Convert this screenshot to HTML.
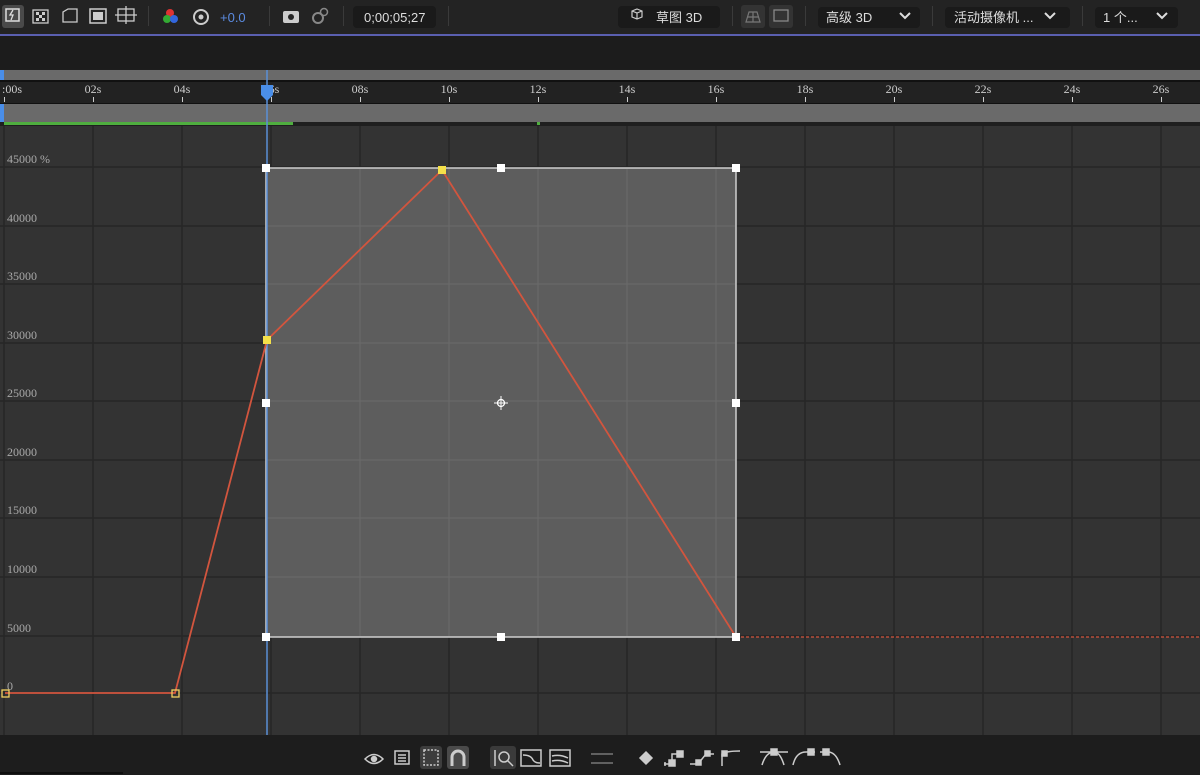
<!DOCTYPE html>
<html><head><meta charset="utf-8"><style>
html,body{margin:0;padding:0;background:#1d1d1d;width:1200px;height:775px;overflow:hidden;font-family:"Liberation Sans","Noto Sans CJK SC",sans-serif}
svg{display:block}
</style></head><body>
<svg width="1200" height="775" xmlns="http://www.w3.org/2000/svg" font-family="Liberation Sans, Noto Sans CJK SC, sans-serif">
<rect x="0" y="0" width="1200" height="34" fill="#232323"/>
<rect x="0" y="34" width="1200" height="2" fill="#5a5fb0"/>
<rect x="0" y="36" width="1200" height="33" fill="#1c1c1c"/>
<rect x="2" y="5" width="22" height="23" rx="3" fill="#4a4a4a"/>
<rect x="6" y="9" width="13" height="12" fill="none" stroke="#ddd" stroke-width="1.5"/>
<path d="M13 10 L10 15 L13 15 L11 20" stroke="#ddd" stroke-width="1.3" fill="none"/>
<g fill="#ccc"><rect x="33" y="10" width="15" height="13" fill="none" stroke="#ccc" stroke-width="1.3"/><rect x="36" y="12" width="3" height="3"/><rect x="42" y="12" width="3" height="3"/><rect x="39" y="15" width="3" height="3"/><rect x="36" y="18" width="3" height="3"/><rect x="42" y="18" width="3" height="3"/></g>
<path d="M63 22 L63 12 L68 9 L77 9 L77 22 Z" fill="none" stroke="#ccc" stroke-width="1.3"/>
<rect x="90" y="9" width="16" height="14" fill="none" stroke="#ccc" stroke-width="1.5"/><rect x="93" y="12" width="10" height="8" fill="#ccc"/>
<rect x="118" y="9" width="16" height="12" fill="none" stroke="#ccc" stroke-width="1.3"/><path d="M126 6 V24 M115 15 H137" stroke="#ccc" stroke-width="1.3"/>
<rect x="148" y="6" width="1" height="20" fill="#3a3a3a"/>
<circle cx="170" cy="13" r="4" fill="#d33"/><circle cx="167" cy="19" r="4" fill="#3a3"/><circle cx="174" cy="19" r="4" fill="#36d"/>
<circle cx="201" cy="17" r="7" fill="none" stroke="#ccc" stroke-width="2"/><circle cx="201" cy="17" r="2.5" fill="#ccc"/>
<text x="220" y="22" font-size="13" fill="#5b8be0">+0.0</text>
<rect x="269" y="6" width="1" height="20" fill="#3a3a3a"/>
<rect x="283" y="11" width="16" height="12" rx="2" fill="#ccc"/><circle cx="291" cy="17" r="3" fill="#232323"/>
<circle cx="318" cy="18" r="5" fill="none" stroke="#888" stroke-width="2"/><circle cx="324" cy="12" r="3.5" fill="none" stroke="#888" stroke-width="1.5"/>
<rect x="343" y="6" width="1" height="20" fill="#3a3a3a"/>
<rect x="353" y="6" width="83" height="22" rx="4" fill="#1a1a1a"/>
<text x="364" y="22" font-size="13" fill="#ddd">0;00;05;27</text>
<rect x="448" y="6" width="1" height="20" fill="#3a3a3a"/>
<rect x="618" y="6" width="102" height="22" rx="4" fill="#1a1a1a"/>
<path d="M632 11 L637 9 L642 11 L642 17 L637 19 L632 17 Z M632 11 L637 13 L642 11 M637 13 V19" fill="none" stroke="#ccc" stroke-width="1.2"/>
<text x="656" y="22" font-size="13" fill="#ddd">草图 3D</text>
<rect x="732" y="6" width="1" height="20" fill="#3a3a3a"/>
<rect x="741" y="5" width="24" height="23" rx="3" fill="#333"/>
<path d="M746 22 L749 12 H757 L760 22 Z M753 12 V22 M747 17 H759" fill="none" stroke="#777" stroke-width="1.2"/>
<rect x="769" y="5" width="24" height="23" rx="3" fill="#333"/>
<rect x="774" y="10" width="14" height="11" fill="none" stroke="#888" stroke-width="1.3"/>
<rect x="805" y="6" width="1" height="20" fill="#3a3a3a"/>
<rect x="818" y="7" width="102" height="21" rx="4" fill="#1a1a1a"/>
<text x="826" y="22" font-size="13" fill="#ddd">高级 3D</text>
<path d="M900 13 L905 18 L910 13" fill="none" stroke="#ddd" stroke-width="2"/>
<rect x="932" y="6" width="1" height="20" fill="#3a3a3a"/>
<rect x="945" y="7" width="125" height="21" rx="4" fill="#1a1a1a"/>
<text x="954" y="22" font-size="13" fill="#ddd">活动摄像机 ...</text>
<path d="M1045 13 L1050 18 L1055 13" fill="none" stroke="#ddd" stroke-width="2"/>
<rect x="1082" y="6" width="1" height="20" fill="#3a3a3a"/>
<rect x="1095" y="7" width="83" height="21" rx="4" fill="#1a1a1a"/>
<text x="1103" y="22" font-size="13" fill="#ddd">1 个...</text>
<path d="M1157 13 L1162 18 L1167 13" fill="none" stroke="#ddd" stroke-width="2"/>

<rect x="0" y="70" width="1200" height="10" fill="#6a6a6a"/>
<rect x="0" y="80" width="1200" height="2" fill="#111"/>
<rect x="0" y="82" width="1200" height="21" fill="#222"/>
<rect x="0" y="103" width="1200" height="1" fill="#111"/>
<rect x="0" y="104" width="1200" height="18" fill="#6a6a6a"/>
<rect x="0" y="122" width="1200" height="4" fill="#1f1f1f"/>
<rect x="4" y="122" width="289" height="3" fill="#4fae3f"/>
<rect x="537" y="122" width="3" height="3" fill="#4fae3f"/>
<rect x="0" y="70" width="4" height="10" fill="#4a8ee8"/>
<rect x="0" y="104" width="4" height="18" fill="#4a8ee8"/>
<g fill="#ccc" font-family="Liberation Serif, serif" font-size="12" text-anchor="middle">
<text x="12" y="93">:00s</text><text x="93" y="93">02s</text><text x="182" y="93">04s</text><text x="271" y="93">06s</text><text x="360" y="93">08s</text><text x="449" y="93">10s</text><text x="538" y="93">12s</text><text x="627" y="93">14s</text><text x="716" y="93">16s</text><text x="805" y="93">18s</text><text x="894" y="93">20s</text><text x="983" y="93">22s</text><text x="1072" y="93">24s</text><text x="1161" y="93">26s</text>
</g>
<g stroke="#ccc" stroke-width="1">
<path d="M4.5 97 V102 M93.5 97 V102 M182.5 97 V102 M271.5 97 V102 M360.5 97 V102 M449.5 97 V102 M538.5 97 V102 M627.5 97 V102 M716.5 97 V102 M805.5 97 V102 M894.5 97 V102 M983.5 97 V102 M1072.5 97 V102 M1161.5 97 V102"/>
</g>

<rect x="0" y="126" width="1200" height="609" fill="#333"/>
<g stroke="#262626" stroke-width="1.5">
<path d="M4 126 V735 M93 126 V735 M182 126 V735 M271 126 V735 M360 126 V735 M449 126 V735 M538 126 V735 M627 126 V735 M716 126 V735 M805 126 V735 M894 126 V735 M983 126 V735 M1072 126 V735 M1161 126 V735"/>
<path d="M0 167 H1200 M0 226 H1200 M0 284 H1200 M0 343 H1200 M0 401 H1200 M0 460 H1200 M0 518 H1200 M0 577 H1200 M0 636 H1200 M0 693 H1200"/>
</g>
<g fill="#aaa" font-family="Liberation Serif, serif" font-size="12">
<text x="7" y="163">45000 %</text><text x="7" y="222">40000</text><text x="7" y="280">35000</text><text x="7" y="339">30000</text><text x="7" y="397">25000</text><text x="7" y="456">20000</text><text x="7" y="514">15000</text><text x="7" y="573">10000</text><text x="7" y="632">5000</text><text x="7" y="690">0</text>
</g>
<rect x="266" y="168" width="470" height="469" fill="#5d5d5d" stroke="#cfcfcf" stroke-width="1.5"/>
<g stroke="#6a6a6a" stroke-width="1">
<path d="M360 169 V636 M449 169 V636 M538 169 V636 M627 169 V636 M716 169 V636 M267 226 H735 M267 284 H735 M267 343 H735 M267 401 H735 M267 460 H735 M267 518 H735 M267 577 H735"/>
</g>
<line x1="267" y1="70" x2="267" y2="735" stroke="#5b8fd6" stroke-width="1.5"/>
<path d="M261 85 H273 V95 L267 101 L261 95 Z" fill="#4a8ee8"/>
<polyline points="5,693 175,693 267,340 442,170 736,637" fill="none" stroke="#d2553e" stroke-width="1.8"/>
<line x1="736" y1="637" x2="1200" y2="637" stroke="#d2553e" stroke-width="1.2" stroke-dasharray="3,2"/>
<g fill="#fff">
<rect x="262" y="164" width="8" height="8"/><rect x="497" y="164" width="8" height="8"/><rect x="732" y="164" width="8" height="8"/>
<rect x="262" y="399" width="8" height="8"/><rect x="732" y="399" width="8" height="8"/>
<rect x="262" y="633" width="8" height="8"/><rect x="497" y="633" width="8" height="8"/><rect x="732" y="633" width="8" height="8"/>
</g>
<rect x="438" y="166" width="8" height="8" fill="#f4e04a"/>
<rect x="263" y="336" width="8" height="8" fill="#f4e04a"/>
<rect x="2" y="690" width="7" height="7" fill="none" stroke="#f0d060" stroke-width="1.3"/>
<rect x="172" y="690" width="7" height="7" fill="none" stroke="#f0d060" stroke-width="1.3"/>
<circle cx="501" cy="403" r="3.5" fill="none" stroke="#fff" stroke-width="1.3"/>
<path d="M494 403 H508 M501 396 V410" stroke="#fff" stroke-width="1"/>

<rect x="0" y="735" width="1200" height="40" fill="#1d1d1d"/>
<rect x="0" y="772" width="123" height="2" fill="#0e0e0e"/>
<g fill="none" stroke="#ccc" stroke-width="1.5">
<path d="M365 759 Q374 750 383 759 Q374 768 365 759 Z"/><circle cx="374" cy="759" r="2.5" fill="#ccc"/>
<rect x="395" y="751" width="14" height="13"/><path d="M398 755 H406 M398 758 H406 M398 761 H406"/>
<rect x="420" y="746" width="22" height="23" rx="3" fill="#3d3d3d" stroke="none"/>
<rect x="424" y="750" width="14" height="15" stroke-dasharray="2,1.5"/>
<rect x="447" y="746" width="22" height="23" rx="3" fill="#4a4a4a" stroke="none"/>
<path d="M452 766 V757 A6 6 0 0 1 464 757 V766" stroke-width="3"/>
<rect x="490" y="746" width="26" height="23" rx="3" fill="#3a3a3a" stroke="none"/>
<path d="M495 750 V766"/><circle cx="504" cy="757" r="5"/><path d="M508 761 L513 766"/>
<rect x="521" y="750" width="20" height="16"/><path d="M523 755 Q531 755 533 760 Q535 763 540 763"/>
<rect x="550" y="750" width="20" height="16"/><path d="M552 756 Q560 754 568 758 M552 761 Q560 759 568 763"/>
<path d="M591 754 H613 M591 763 H613" stroke="#777"/>
<path d="M646 752 L652 758 L646 764 L640 758 Z" fill="#ccc"/>
<path d="M664 764 H672 V754 H682 M665 762 V766" /><rect x="669" y="760" width="6" height="6" fill="#ccc"/><rect x="677" y="751" width="6" height="6" fill="#ccc"/>
<path d="M690 764 H698 L706 754 H714"/><rect x="696" y="760" width="5" height="5" fill="#ccc"/><rect x="705" y="751" width="5" height="5" fill="#ccc"/>
<path d="M722 766 V754 Q726 751 740 751"/><rect x="722" y="751" width="5" height="5" fill="#ccc"/>
<path d="M762 765 Q766 752 774 752 Q780 752 784 765 M760 752 H788"/><rect x="771" y="749" width="6" height="6" fill="#ccc"/>
<path d="M793 765 Q796 752 806 752 H815"/><rect x="808" y="749" width="6" height="6" fill="#ccc"/>
<path d="M820 752 H828 Q836 752 840 765"/><rect x="823" y="749" width="6" height="6" fill="#ccc"/>
</g>
</svg>
</body></html>
